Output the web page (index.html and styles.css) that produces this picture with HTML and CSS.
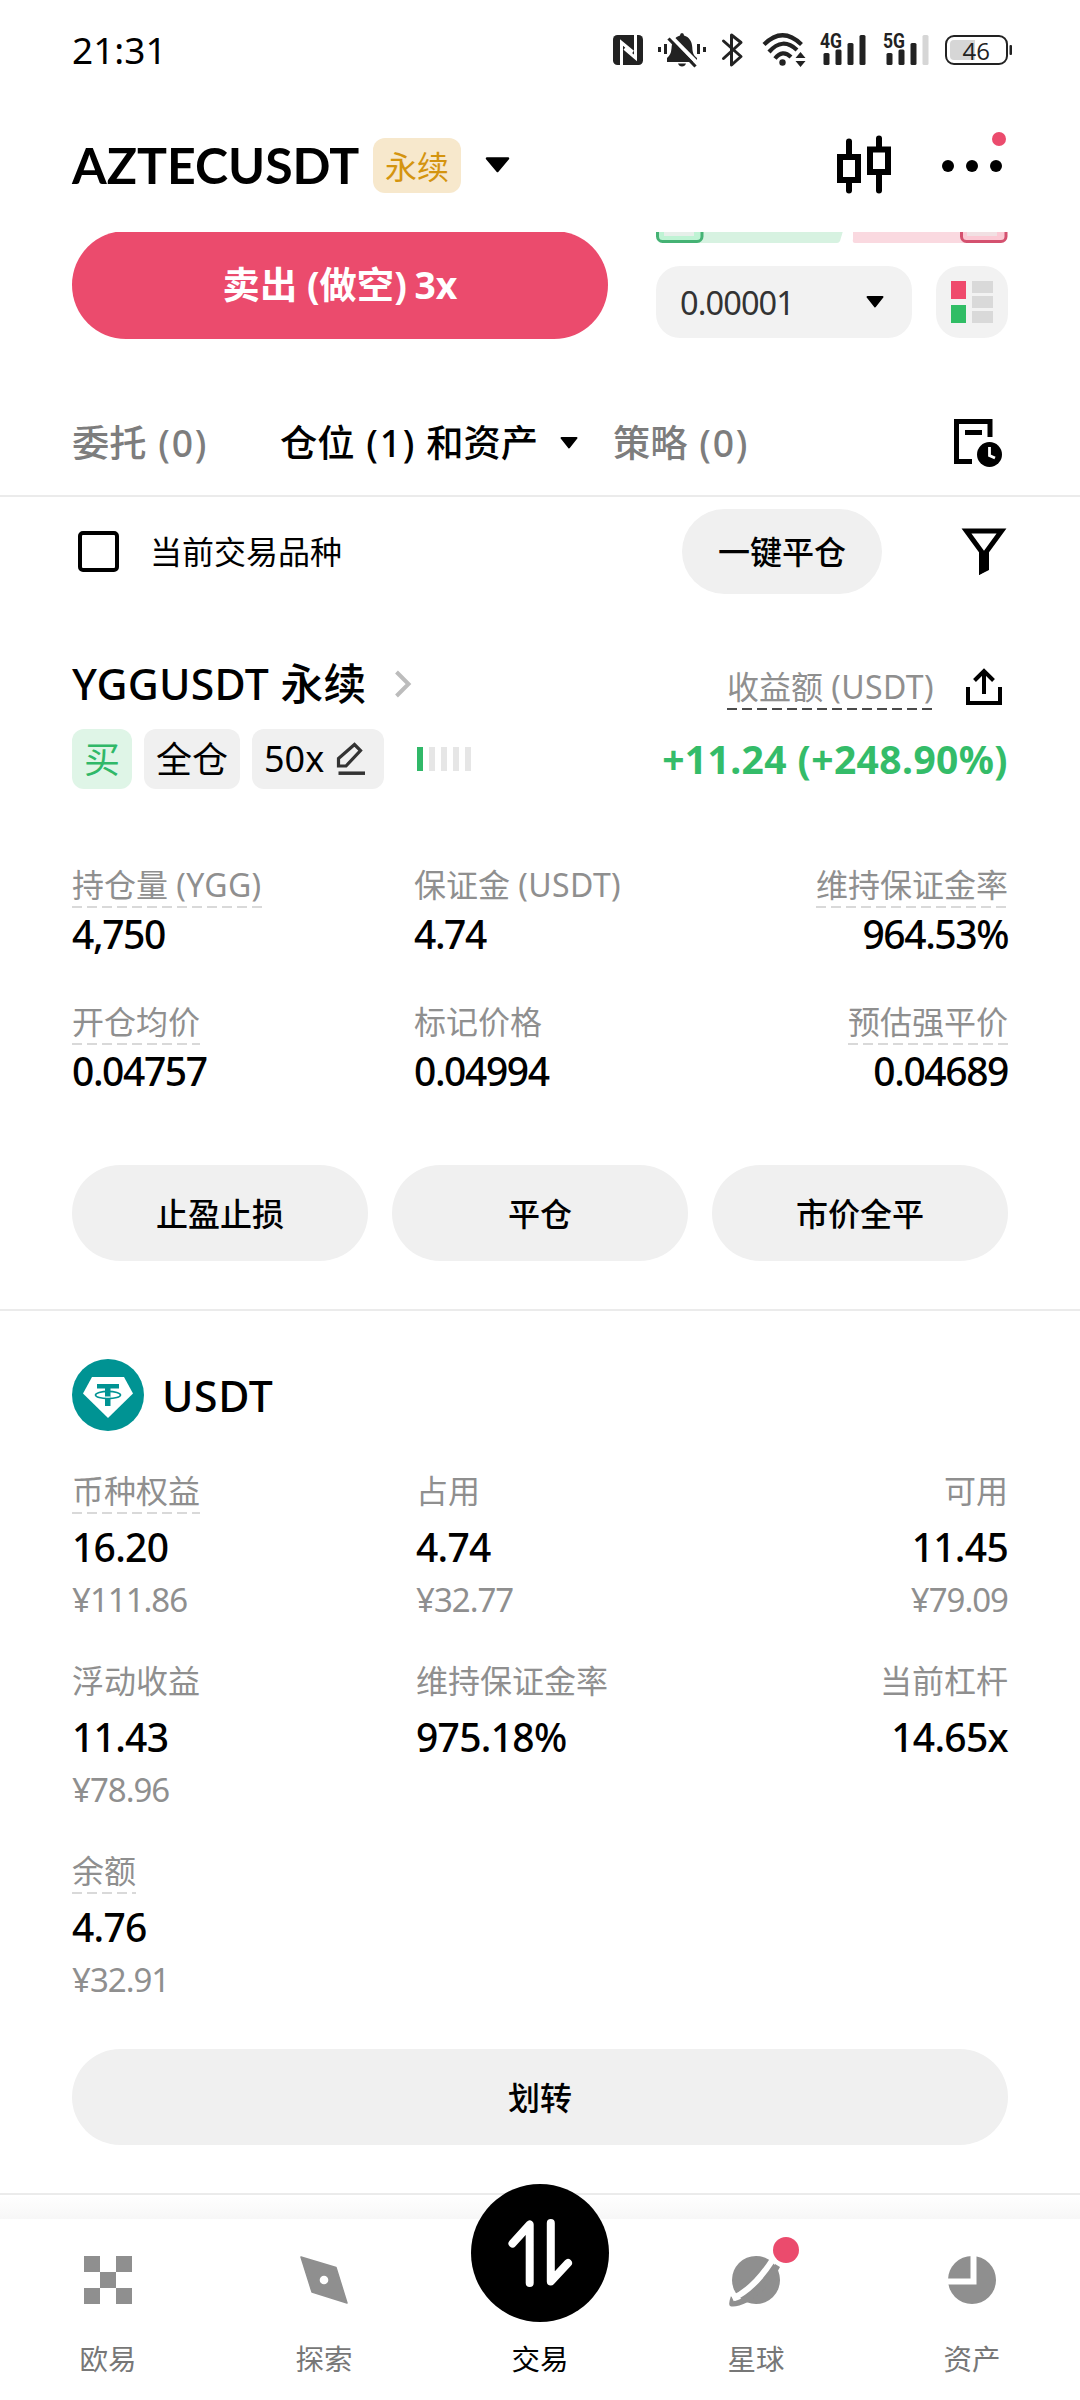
FILE: index.html
```html
<!DOCTYPE html>
<html lang="zh-CN">
<head>
<meta charset="utf-8">
<title>AZTECUSDT 永续</title>
<link rel="stylesheet" href="styles.css">
</head>
<body>
<div class="app">
  <div class="status-bar">
    <div class="clock">21:31</div>
    <div class="status-icons">
      <svg width="40" height="40" viewBox="610 30 40 40"><rect x="613" y="35" width="30" height="30" rx="4.500" fill="#222"/><path d="M621.500 65V42.500L633 52M635.500 35V58L624.500 48.500" fill="none" stroke="#fff" stroke-width="3"/></svg>
      <svg width="64" height="40" viewBox="650 30 64 40"><g fill="#222"><path d="M667 62v-4q4-3 4.500-9.500C672 41 675 37 680 35.500q0-2.500 2-2.500t2 2.500c5 1.500 8 5.500 8.300 12 .2 5 1.200 8 4.700 10.500v4z"/><path d="M678 63.500h8q-1 3-4 3t-4-3z"/><path d="M658 47h3v5h-3zM664 44h3v10h-3zM697 44h3v10h-3zM703 47h3v5h-3z"/></g><path d="M671 36.500L699 65" stroke="#fff" stroke-width="4"/><path d="M668.500 38.500L695.500 66.500" stroke="#222" stroke-width="3.200"/></svg>
      <svg width="36" height="40" viewBox="714 30 36 40"><path d="M723.500 41L741 56.500 731.500 65V35L741 42.500 723.500 58.500" fill="none" stroke="#222" stroke-width="3" stroke-linejoin="round" stroke-linecap="round"/></svg>
      <svg width="64" height="40" viewBox="750 30 64 40"><g fill="none" stroke="#222" stroke-width="4.200"><path d="M764 44.500Q782.500 26 801.500 44.500"/><path d="M769 52Q782.500 36.500 797 50"/><path d="M775 58.500Q782.500 49 791 57"/></g><circle cx="782.500" cy="62.500" r="3.200" fill="#222"/><path d="M800.500 52l5 6h-10zM800.500 67l5-6h-10z" fill="#222"/></svg>
      <svg width="60" height="40" viewBox="814 30 60 40"><text class="net" x="820" y="48" textLength="22" lengthAdjust="spacingAndGlyphs">4G</text><g fill="#222"><rect x="823.500" y="53" width="6" height="12" rx="1.500"/><rect x="835.500" y="49.500" width="6" height="15.500" rx="1.500"/><rect x="847.500" y="43" width="6" height="22" rx="1.500"/><rect x="859.500" y="35" width="6" height="30" rx="1.500"/></g></svg>
      <svg width="64" height="40" viewBox="874 30 64 40"><text class="net" x="883" y="48" textLength="22" lengthAdjust="spacingAndGlyphs">5G</text><g fill="#222"><rect x="886.500" y="53" width="6" height="12" rx="1.500"/><rect x="898.500" y="49.500" width="6" height="15.500" rx="1.500"/><rect x="910.500" y="43" width="6" height="22" rx="1.500"/><rect x="922.500" y="35" width="6" height="30" rx="1.500" fill="#d6d6d6"/></g></svg>
      <svg width="76" height="40" viewBox="938 30 76 40"><rect x="946" y="36" width="61" height="28" rx="8" fill="#fff" stroke="#222" stroke-width="2"/><path d="M954 40h21v20h-21q-4 0-4-4v-12q0-4 4-4z" fill="#d6d6d6"/><rect x="1009.500" y="45" width="2.500" height="10" rx="1" fill="#222"/><text class="bat" x="962.500" y="60">46</text></svg>
    </div>
  </div>

  <header class="header">
    <h1 class="pair">AZTECUSDT</h1>
    <span class="pair-tag">永续</span>
    <svg class="pair-caret" width="26" height="18" viewBox="0 0 26 18"><path d="M2 2.500h21L12.500 15z" stroke="#000" stroke-width="2.500" stroke-linejoin="round"/></svg>
    <svg class="candles" width="56" height="60" viewBox="836 135 56 60"><g fill="none" stroke="#000" stroke-width="6"><path d="M840 157h18v23h-18zM870 149.500h18v22.500h-18z"/><path d="M849 141.500v14M849 182v8.500M879 138.500v10M879 174v16.500" stroke-linecap="round"/></g></svg>
    <div class="more"><i></i><i></i><i></i><b class="more-badge"></b></div>
  </header>

  <main class="content">
    <section class="order-row">
      <button class="sell">卖出 (做空) <span class="side-lev">3x</span></button>
      <div class="book">
        <svg width="352" height="12" viewBox="656 231 352 12"><path d="M690 231h153l-3 10q-1 2-3 2h-147z" fill="#d7f2e1"/><path d="M853 231h120v12h-118q-3 0-2-4z" fill="#fad9e0"/><rect x="657.500" y="215" width="44.500" height="26.500" rx="5" fill="#bff3d4" stroke="#45b274" stroke-width="3"/><path d="M664 231h30v5h-30z" fill="#e6efe9"/><rect x="961.500" y="215" width="44.500" height="26.500" rx="5" fill="#fbc9d4" stroke="#d4516f" stroke-width="3"/><path d="M967 231h30v5h-30z" fill="#f1e0e3"/></svg>
        <div class="book-controls">
          <div class="tick"><span>0.00001</span><svg width="18" height="14" viewBox="0 0 18 14"><path d="M1.500 2h15L9 11.500z" stroke="#000" stroke-width="2" stroke-linejoin="round"/></svg></div>
          <div class="book-mode"><svg width="42" height="42" viewBox="0 0 42 42"><path d="M0 0h15v18H0z" fill="#ef4a6c"/><path d="M0 24h15v18H0z" fill="#30bd65"/><path d="M21 0h21v12H21zM21 15h21v12H21zM21 30h21v12H21z" fill="#d9d9d9"/></svg></div>
        </div>
      </div>
    </section>

    <nav class="tabs">
      <span class="tab">委托 <span class="lat">(0)</span></span>
      <span class="tab tab-on">仓位 <span class="lat">(1)</span> 和资产</span>
      <svg class="tab-caret" width="18" height="14" viewBox="0 0 18 14"><path d="M1.500 2h15L9 11.500z" stroke="#000" stroke-width="2" stroke-linejoin="round"/></svg>
      <span class="tab">策略 <span class="lat">(0)</span></span>
      <svg class="history" width="50" height="50" viewBox="954 418 50 50"><path d="M973 461.500H957.500V421.500H991V437M966 432.500H983" fill="none" stroke="#000" stroke-width="5"/><circle cx="990.500" cy="454.500" r="12.500"/><path d="M990.500 447v8.500l5.500 2.500" fill="none" stroke="#fff" stroke-width="2.800"/></svg>
    </nav>

    <div class="filter-row">
      <span class="check"></span>
      <span class="check-label">当前交易品种</span>
      <button class="pill close-all">一键平仓</button>
      <svg width="42" height="48" viewBox="963 527 42 48"><path d="M966.500 531H1001.500L986.500 551.500V568.500L981.500 571V551.500Z" fill="none" stroke="#000" stroke-width="5"/><path d="M979 551h10v18l-10 6z"/></svg>
    </div>

    <section class="position">
      <div class="pos-head">
        <h2 class="pos-name"><span class="ltr">YGGUSDT</span> 永续</h2>
        <svg class="chev" width="18" height="28" viewBox="0 0 18 28"><path d="M2.500 2L14.500 14 2.500 26" fill="none" stroke="#bcbcbc" stroke-width="4"/></svg>
        <span class="label dash dark pnl-label">收益额 <span class="ltr2">(USDT)</span></span>
        <svg class="share" width="38" height="40" viewBox="965 668 38 40"><path d="M968 688v16h32v-16M984 695V673M974.500 681.500l9.500-9.500 9.500 9.500" fill="none" stroke="#000" stroke-width="4"/></svg>
      </div>
      <div class="pos-tags">
        <span class="tag buy">买</span>
        <span class="tag">全仓</span>
        <span class="tag lev"><span>50x</span><svg width="30" height="34" viewBox="336 742 30 34"><path d="M338.500 773.200H365" stroke="#333" stroke-width="3.500"/><path d="M338.500 766V758.500L354.500 744.500L360.500 750.500L346 766Z" fill="none" stroke="#333" stroke-width="3.200"/></svg></span>
        <span class="risk"><i class="on"></i><i></i><i></i><i></i><i></i></span>
        <span class="pnl">+11.24 (+248.90%)</span>
      </div>

      <div class="stats">
        <div><span class="label dash">持仓量 <span class="ltr2">(YGG)</span></span><b>4,750</b></div>
        <div><span class="label">保证金 <span class="ltr2">(USDT)</span></span><b>4.74</b></div>
        <div><span class="label dash">维持保证金率</span><b>964.53%</b></div>
        <div><span class="label dash">开仓均价</span><b>0.04757</b></div>
        <div><span class="label">标记价格</span><b>0.04994</b></div>
        <div><span class="label dash">预估强平价</span><b>0.04689</b></div>
      </div>
      <div class="actions">
        <button class="pill">止盈止损</button>
        <button class="pill">平仓</button>
        <button class="pill">市价全平</button>
      </div>
    </section>

    <section class="asset">
      <div class="coin">
        <svg width="72" height="72" viewBox="0 0 72 72"><circle cx="36" cy="36" r="36" fill="#009393"/><path d="M20 18h32l9 16.500L36 59 11 34.500z" fill="#fff"/><path d="M25 25h22v4.500h-8.500V47h-5.500V29.500H25z" fill="#009393"/><ellipse cx="36" cy="36" rx="12.500" ry="3.600" fill="none" stroke="#009393" stroke-width="1.600"/><path d="M33 38q3 .4 5.500 0" stroke="#fff" stroke-width="1.200" fill="none"/></svg>
        <span class="coin-name">USDT</span>
      </div>
      <div class="stats wide">
        <div><span class="label dash">币种权益</span><b>16.20</b><em>¥111.86</em></div>
        <div><span class="label">占用</span><b>4.74</b><em>¥32.77</em></div>
        <div><span class="label">可用</span><b>11.45</b><em>¥79.09</em></div>
        <div><span class="label">浮动收益</span><b>11.43</b><em>¥78.96</em></div>
        <div><span class="label">维持保证金率</span><b>975.18%</b></div>
        <div><span class="label">当前杠杆</span><b>14.65x</b></div>
        <div><span class="label dash">余额</span><b>4.76</b><em>¥32.91</em></div>
      </div>
      <button class="pill transfer">划转</button>
    </section>
    <div class="fade"></div>
  </main>

  <nav class="bottom-nav">
    <a class="item"><svg width="60" height="60" viewBox="-6 -6 60 60"><path d="M0 0h16v16H0zM32 0h16v16H32zM16 16h16v16H16zM0 32h16v16H0zM32 32h16v16H32z" fill="#8f8f8f"/></svg><span>欧易</span></a>
    <a class="item"><svg width="60" height="60" viewBox="-6 -6 60 60"><path d="M1 1L36 11.500 47 47 12 36z" fill="#8f8f8f" stroke="#8f8f8f" stroke-width="1.500" stroke-linejoin="round"/><circle cx="24" cy="24" r="4.300" fill="#fff"/></svg><span>探索</span></a>
    <a class="item current"><span class="fab"><svg width="66" height="70" viewBox="507 2218 66 70"><path d="M512.500 2243.500L529.700 2224.500V2283M550.800 2223V2281.500L568 2263" fill="none" stroke="#fff" stroke-width="8" stroke-linecap="round" stroke-linejoin="round"/></svg></span><span>交易</span></a>
    <a class="item"><svg class="planet" width="60" height="60" viewBox="726 2250 60 60"><g fill="#8f8f8f"><circle cx="756" cy="2280" r="24"/><path d="M731 2296L735 2301C750 2297 766 2281 775 2264L780 2267C770 2285 765 2290 748 2302Q735 2308 730 2306 Q728 2304 731 2296"/></g><path d="M732.500 2298.500Q754 2289 772.500 2260" fill="none" stroke="#fff" stroke-width="6"/><circle cx="786" cy="2250" r="16" fill="#fff"/><circle cx="786" cy="2250" r="13" fill="#eb4b6d"/></svg><span>星球</span></a>
    <a class="item"><svg width="60" height="60" viewBox="-30 -30 60 60"><circle r="24" fill="#8f8f8f"/><path d="M-25 1.500H1.500V-25" fill="none" stroke="#fff" stroke-width="6"/></svg><span>资产</span></a>
  </nav>
</div>
</body>
</html>
```
FILE: styles.css
```css
* { box-sizing: border-box; margin: 0; padding: 0; }
body {
  width: 1080px; height: 2400px; background: #fff; color: #000; overflow: hidden;
  font-family: "Noto Sans", "Noto Sans CJK SC", sans-serif;
}
button { border: 0; font: inherit; color: inherit; }
svg { display: block; flex: none; overflow: visible; }
i, em { font-style: normal; }
.app { display: flex; flex-direction: column; height: 2400px; }

.status-bar { display: flex; justify-content: space-between; align-items: center; height: 100px; padding: 0 66px 0 72px; }
.clock { font-size: 37px; line-height: 40px; }
.status-icons { display: flex; }
.net { font: 700 21px "Roboto", sans-serif; fill: #222; }
.bat { font: 400 24px "Open Sans", sans-serif; fill: #222; }

.header { display: flex; align-items: center; height: 132px; padding: 0 72px 2px; }
.pair { font: 700 50px/60px "Lato", sans-serif; width: 301px; white-space: nowrap; }
.pair-tag { width: 88px; height: 55px; line-height: 57px; text-align: center; font-size: 32px; color: #d4940f; background: #f7e8cc; border-radius: 12px; }
.pair-caret { margin-left: 24px; }
.candles { margin-left: auto; }
.more { position: relative; display: flex; gap: 12px; margin: 2px 6px 0 50px; }
.more i { width: 12px; height: 12px; border-radius: 50%; background: #000; }
.more-badge { position: absolute; right: -4px; top: -28px; width: 14px; height: 14px; border-radius: 50%; background: #eb4b6d; }

.content { position: relative; height: 1988px; overflow: hidden; flex: none; }
.order-row { display: flex; padding: 0 72px; gap: 48px; height: 108px; margin-top: -1px; }
.sell { width: 536px; height: 108px; border-radius: 54px; background: #eb4b6d; color: #fff; font-size: 37.3px; font-weight: 700; line-height: 108px; }
.side-lev { margin-left: -2px; }
.book { display: flex; flex-direction: column; justify-content: space-between; padding-bottom: 1px; }
.book-controls { display: flex; gap: 24px; }
.tick { display: flex; align-items: center; justify-content: space-between; width: 256px; height: 72px; padding: 0 28px 0 24px; border-radius: 24px; background: #f2f2f2; font-size: 32.500px; color: #333; letter-spacing: -0.900px; }
.book-mode { display: grid; place-items: center; width: 72px; height: 72px; border-radius: 24px; background: #f2f2f2; }

.tabs { display: flex; align-items: center; height: 158px; padding: 52px 77px 0 72px; border-bottom: 2px solid #ebebeb; color: #7d7d7d; font-size: 37.300px; line-height: 56px; white-space: nowrap; font-weight: 500; }
.tab { width: 208px; }
.lat { margin: 0 0.500px 0 2px; letter-spacing: 1.700px; }
.tab-on { color: #000; width: 280px; }
.tab-caret { margin-right: 35px; }
.history { margin-left: auto; }

.filter-row { display: flex; align-items: center; height: 108px; padding: 0 75px 0 78px; }
.check { width: 41px; height: 41px; border: 4px solid #000; border-radius: 5px; }
.check-label { margin-left: 31px; padding-top: 2px; font-size: 32px; line-height: 40px; }
.pill { height: 96px; border-radius: 48px; background: #f0f0f0; font-size: 32px; font-weight: 500; line-height: 40px; padding-top: 2px; flex: 1; }
.close-all { flex: none; width: 200px; height: 85px; margin: 0 81px 0 auto; }

.position { padding: 49px 72px 0; height: 706px; border-bottom: 2px solid #ebebeb; }
.pos-head { display: flex; align-items: center; height: 60px; }
.pos-name { font-size: 42.700px; font-weight: 500; line-height: 60px; white-space: nowrap; width: 322px; letter-spacing: 0.300px; }
.label { display: inline-block; font-size: 32px; line-height: 42px; height: 44px; color: #8f8f8f; white-space: nowrap; }
.ltr2 { letter-spacing: 0.400px; }
.dash { background: repeating-linear-gradient(90deg, #d9d9d9 0 10px, transparent 10px 15px) 0 100% / 100% 2px no-repeat; }
.dash.dark { background-image: repeating-linear-gradient(90deg, #4a4a4a 0 10px, transparent 10px 15px); }
.pnl-label { margin: 8px 31px 0 auto; }
.share { margin: 6px 5px 0 0; }
.pos-tags { display: flex; align-items: center; gap: 12px; height: 60px; margin-top: 15px; }
.tag { height: 60px; padding: 0 12px; line-height: 62px; border-radius: 12px; background: #f0f0f0; font-size: 36px; }
.buy { background: #dff5e7; color: #30b868; }
.lev { display: flex; align-items: center; justify-content: space-between; width: 132px; padding-right: 18px; }
.risk { display: flex; gap: 6px; margin-left: 21px; }
.risk i { width: 6px; height: 24px; background: #e6e6e6; }
.risk .on { background: #30b868; }
.pnl { margin-left: auto; font-size: 39px; font-weight: 700; line-height: 60px; color: #34bc69; letter-spacing: 0.400px; }

.stats { display: grid; grid-template-columns: 342px 1fr auto; grid-auto-rows: 137px; margin-top: 75px; }
.stats > div { display: flex; flex-direction: column; align-items: flex-start; }
.stats > div:nth-child(3n) { align-items: flex-end; }
.stats b { margin-top: -2px; font-size: 39px; font-weight: 500; line-height: 56px; letter-spacing: -1.400px; }
.stats em { font-size: 33px; line-height: 40px; color: #8f8f8f; letter-spacing: -1px; margin-top: 5px; }
.actions { display: flex; gap: 24px; margin-top: 27px; }

.asset { padding: 48px 72px; height: 884px; border-bottom: 2px solid #ebebeb; }
.coin { display: flex; align-items: center; height: 72px; gap: 18px; }
.coin-name { font-size: 42.700px; font-weight: 500; letter-spacing: 0.600px; }
.wide { grid-template-columns: 344px 1fr auto; grid-auto-rows: 190px; margin-top: 39px; }
.wide b { margin-top: 5px; letter-spacing: -0.700px; }
.transfer { display: block; width: 100%; margin-top: 9px; }
.fade { height: 24px; background: linear-gradient(#fff, #f7f7f7); }

.bottom-nav { position: relative; display: grid; grid-template-columns: repeat(5, 1fr); height: 180px; background: #fff; }
.item { display: flex; flex-direction: column; align-items: center; padding-top: 30px; font-size: 28.500px; line-height: 40px; color: #777; }
.item > svg { margin-bottom: 29px; }
.current { color: #000; padding-top: 0; }
.fab { display: grid; place-items: center; width: 138px; height: 138px; margin: -36px 0 17px; border-radius: 50%; background: #000; }
```
